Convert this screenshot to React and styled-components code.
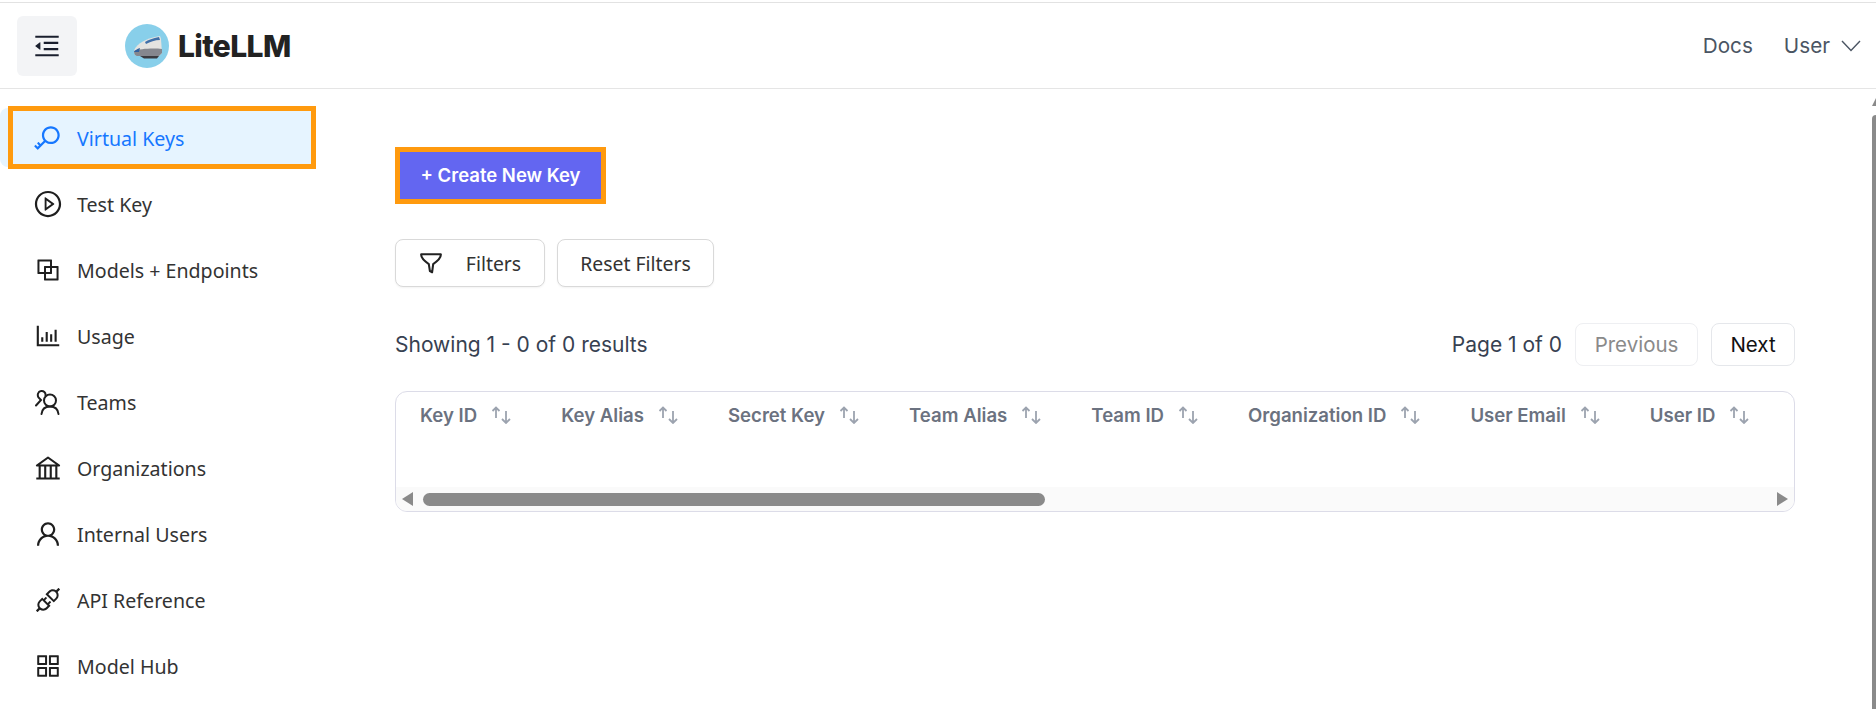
import React from "react";
import styled, { createGlobalStyle } from "styled-components";
import {
  AiOutlineKey,
  AiOutlinePlayCircle,
  AiOutlineBlock,
  AiOutlineBarChart,
  AiOutlineBank,
  AiOutlineUser,
  AiOutlineApi,
  AiOutlineAppstore,
  AiOutlineMenuFold,
} from "react-icons/ai";

const GlobalStyle = createGlobalStyle`
  html, body { margin: 0; padding: 0; background: #fff; overflow: hidden; }
  * { box-sizing: border-box; }
`;

const Page = styled.div`
  width: 1876px;
  height: 709px;
  display: flex;
  flex-direction: column;
  padding-top: 2px;
  overflow: hidden;
  font-family: Inter, "Liberation Sans", sans-serif;
`;

const TopRule = styled.div`
  height: 1px;
  background: #e2e2e2;
`;

const Header = styled.header`
  height: 86px;
  flex: none;
  display: flex;
  align-items: center;
  padding: 0 15px 0 17px;
  border-bottom: 1px solid #e5e5e5;
`;

const ToggleButton = styled.button`
  width: 60px;
  height: 60px;
  border: 0;
  border-radius: 6px;
  background: #f3f4f6;
  display: flex;
  align-items: center;
  justify-content: center;
  color: #1a1f2e;
  font-size: 30px;
  padding: 0;
`;

const Logo = styled.div`
  display: flex;
  align-items: center;
  gap: 9px;
  margin-left: 48px;
`;

const LogoName = styled.span`
  font-size: 30px;
  font-weight: 800;
  color: #222;
  letter-spacing: -0.6px;
`;

const HeaderLinks = styled.nav`
  margin-left: auto;
  display: flex;
  align-items: center;
  color: #4b5563;
  font-size: 20.7px;
`;

const UserMenu = styled.span`
  display: flex;
  align-items: center;
  gap: 11px;
  margin-left: 31px;
`;

const Body = styled.div`
  flex: 1;
  display: flex;
  min-height: 0;
`;

const Sidebar = styled.aside`
  width: 330px;
  flex: none;
  padding: 17px 0 0 8px;
`;

const MenuItem = styled.div`
  position: relative;
  width: 308px;
  display: flex;
  align-items: center;
  gap: 14px;
  font-family: "Noto Sans", sans-serif;
  font-size: 19.6px;
  height: ${(p) => (p.$active ? "63px" : "66px")};
  margin-bottom: ${(p) => (p.$active ? "2px" : "0")};
  padding-left: ${(p) => (p.$active ? "20px" : "25px")};
  color: ${(p) => (p.$active ? "#1677ff" : "#333")};
  background: ${(p) => (p.$active ? "#e6f4ff" : "transparent")};
  border: ${(p) => (p.$active ? "5px solid #ff9a0e" : "0")};

  ${(p) =>
    p.$active &&
    `&::before {
      content: "";
      position: absolute;
      left: -13px;
      top: -3px;
      bottom: -3px;
      width: 8px;
      background: #e6f4ff;
      border-radius: 8px 0 0 8px;
    }`}
`;

const MenuIcon = styled.span`
  width: 30px;
  height: 30px;
  flex: none;
  display: flex;
  align-items: center;
  justify-content: center;
  font-size: 30px;
  color: ${(p) => (p.$active ? "#1677ff" : "#1f1f1f")};
`;

const MenuLabel = styled.span`
  position: relative;
  top: ${(p) => (p.$active ? "1px" : "0")};
`;

const Main = styled.main`
  flex: 1;
  padding: 58px 77px 0 65px;
`;

const CreateButton = styled.button`
  display: block;
  width: 211px;
  height: 57px;
  border: 5px solid #ff9a0e;
  background: #6366f1;
  color: #fff;
  font-family: inherit;
  font-size: 18.5px;
  font-weight: 600;
  padding: 0 0 2px;
`;

const FilterRow = styled.div`
  display: flex;
  gap: 12px;
  margin-top: 35px;
`;

const FilterButton = styled.button`
  height: 48px;
  width: ${(p) => p.$width};
  display: flex;
  align-items: center;
  justify-content: center;
  gap: 23px;
  border: 1px solid #d9d9d9;
  border-radius: 8px;
  background: #fff;
  box-shadow: 0 1px 2px rgba(0, 0, 0, 0.05);
  font-family: "Noto Sans", sans-serif;
  font-size: 19.4px;
  color: #333;
  padding: 0;
`;

const ResultRow = styled.div`
  display: flex;
  align-items: center;
  justify-content: space-between;
  height: 43px;
  margin-top: 36px;
  color: #374151;
  font-size: 21px;
`;

const Pager = styled.div`
  display: flex;
  align-items: center;
  gap: 13px;
`;

const PagerButton = styled.button`
  height: 43px;
  width: ${(p) => p.$width};
  border-radius: 8px;
  border: 1px solid ${(p) => (p.disabled ? "#eeeff2" : "#e5e7eb")};
  background: #fff;
  color: ${(p) => (p.disabled ? "#8a8a8a" : "#111")};
  font-family: inherit;
  font-size: 20.5px;
  padding: 0;
`;

const TableCard = styled.div`
  height: 121px;
  margin-top: 25px;
  border: 1px solid #dcdce8;
  border-radius: 12px;
  display: flex;
  flex-direction: column;
  overflow: hidden;
`;

const HeadRow = styled.div`
  display: flex;
  gap: 50px;
  padding: 11px 0 0 24px;
  height: 95px;
`;

const HeadCell = styled.div`
  display: flex;
  align-items: center;
  height: 24px;
  gap: 14px;
  color: #6b7280;
  font-size: 18.6px;
  font-weight: 600;
`;

const ScrollTrack = styled.div`
  flex: 1;
  display: flex;
  align-items: center;
  background: #fafafa;
  padding: 0 6px;
`;

const ScrollThumb = styled.div`
  width: 622px;
  height: 13px;
  margin-left: 10px;
  background: #8a8a8a;
  border-radius: 7px;
`;

const ScrollArrow = styled.span`
  width: 0;
  height: 0;
  border-top: 7px solid transparent;
  border-bottom: 7px solid transparent;
  border-right: ${(p) => (p.$right ? "0" : "11px solid #8a8a8a")};
  border-left: ${(p) => (p.$right ? "11px solid #8a8a8a" : "0")};
  margin-left: ${(p) => (p.$right ? "auto" : "0")};
`;

const PageScrollbar = styled.div`
  width: 4px;
  flex: none;
  display: flex;
  flex-direction: column;
  align-items: flex-end;
  padding-top: 9px;
`;

const PageScrollUp = styled.span`
  width: 0;
  height: 0;
  border-left: 4px solid transparent;
  border-bottom: 8px solid #8a8a8a;
`;

const PageScrollThumb = styled.div`
  flex: 1;
  width: 4px;
  margin-top: 9px;
  background: #8a8a8a;
  border-top-left-radius: 4px;
`;

const TrainLogo = () => (
  <svg width="44" height="44" viewBox="0 0 44 44">
    <circle cx="22" cy="22" r="22" fill="#88cfea" />
    <path d="M9 27c1-5 8-11 21-14l5-1 1 3 1 14-3 3H13c-3 0-4-2-4-5z" fill="#e4e3e0" />
    <path d="M20 18c3-2 8-4 14-5l1 3c-5 0-10 2-14 4z" fill="#3f6fa8" />
    <path d="M9 27c5-2 18-3 28-2v4l-3 3H13c-3 0-4-2-4-5z" fill="#85878e" />
    <path d="M9 28c1-2 3-3 6-4l-1 4z" fill="#2f5f9e" />
    <path d="M15 32h19l-2 2.5H19z" fill="#3b3b40" />
  </svg>
);

const SortArrows = () => (
  <svg width="20" height="18" viewBox="0 0 20 18" fill="none" stroke="#9ca3af" strokeWidth="1.8">
    <path d="M5 12V1.500M1.500 5 5 1.500 8.500 5" />
    <path d="M15 5v12M11 13l4 4 4-4" />
  </svg>
);

const FunnelIcon = () => (
  <svg width="24" height="24" viewBox="0 0 22 22" fill="none" stroke="#222" strokeWidth="1.9" strokeLinejoin="round">
    <path d="M2 3h18c.4 3-2 5.500-7 9l-1 7.500-2-1-1-6.500C4 8.500 1.600 6 2 3z" />
  </svg>
);

const TeamsIcon = () => (
  <svg width="26" height="26" viewBox="0 0 26 26" fill="none" stroke="#1f1f1f" strokeWidth="2" strokeLinecap="round">
    <circle cx="15" cy="11.500" r="6" />
    <path d="M6.500 25c.5-4.500 3.500-7.500 8.500-7.500s8 3 8.500 7.500" />
    <path d="M10.500 6.500C11 3.500 8.500 1.500 6 2c-3 .5-4 4-2.500 6.500L6 11l-5 5.500" />
  </svg>
);

const menu = [
  { label: "Virtual Keys", icon: <AiOutlineKey />, active: true },
  { label: "Test Key", icon: <AiOutlinePlayCircle /> },
  { label: "Models + Endpoints", icon: <AiOutlineBlock /> },
  { label: "Usage", icon: <AiOutlineBarChart /> },
  { label: "Teams", icon: <TeamsIcon /> },
  { label: "Organizations", icon: <AiOutlineBank /> },
  { label: "Internal Users", icon: <AiOutlineUser /> },
  { label: "API Reference", icon: <AiOutlineApi /> },
  { label: "Model Hub", icon: <AiOutlineAppstore /> },
];

const columns = ["Key ID", "Key Alias", "Secret Key", "Team Alias", "Team ID", "Organization ID", "User Email", "User ID"];

export default function App() {
  return (
    <Page>
      <GlobalStyle />
      <TopRule />
      <Header>
        <ToggleButton aria-label="Toggle sidebar">
          <AiOutlineMenuFold />
        </ToggleButton>
        <Logo>
          <TrainLogo />
          <LogoName>LiteLLM</LogoName>
        </Logo>
        <HeaderLinks>
          <span>Docs</span>
          <UserMenu>
            User
            <svg width="20" height="12" viewBox="0 0 20 12" fill="none" stroke="#4b5563" strokeWidth="1.4">
              <path d="M1 1l9 9.500L19 1" />
            </svg>
          </UserMenu>
        </HeaderLinks>
      </Header>
      <Body>
        <Sidebar>
          {menu.map((item) => (
            <MenuItem key={item.label} $active={item.active}>
              <MenuIcon $active={item.active}>{item.icon}</MenuIcon>
              <MenuLabel $active={item.active}>{item.label}</MenuLabel>
            </MenuItem>
          ))}
        </Sidebar>
        <Main>
          <CreateButton>+ Create New Key</CreateButton>
          <FilterRow>
            <FilterButton $width="150px">
              <FunnelIcon />
              Filters
            </FilterButton>
            <FilterButton $width="157px">Reset Filters</FilterButton>
          </FilterRow>
          <ResultRow>
            <span>Showing 1 - 0 of 0 results</span>
            <Pager>
              <span>Page 1 of 0</span>
              <PagerButton disabled $width="123px">Previous</PagerButton>
              <PagerButton $width="84px">Next</PagerButton>
            </Pager>
          </ResultRow>
          <TableCard>
            <HeadRow>
              {columns.map((name) => (
                <HeadCell key={name}>
                  {name}
                  <SortArrows />
                </HeadCell>
              ))}
            </HeadRow>
            <ScrollTrack>
              <ScrollArrow />
              <ScrollThumb />
              <ScrollArrow $right />
            </ScrollTrack>
          </TableCard>
        </Main>
        <PageScrollbar>
          <PageScrollUp />
          <PageScrollThumb />
        </PageScrollbar>
      </Body>
    </Page>
  );
}
